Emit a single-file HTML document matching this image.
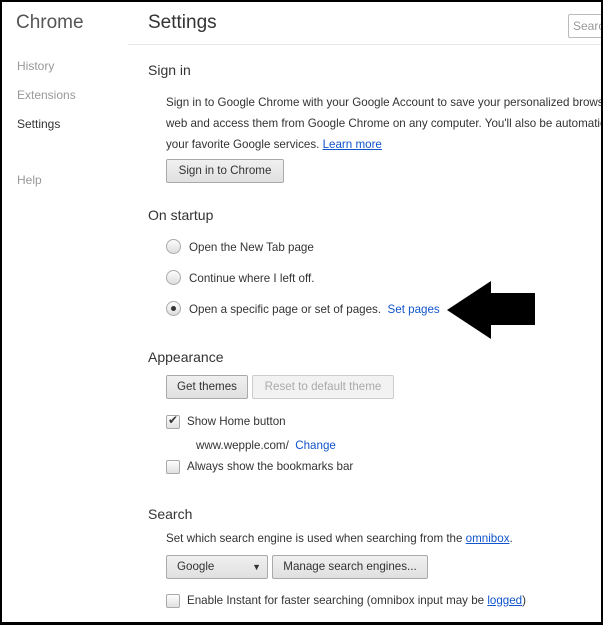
<!DOCTYPE html>
<html><head><style>
body{margin:0;width:603px;height:625px;overflow:hidden;background:#fff;font-family:"Liberation Sans",sans-serif;position:relative}
.f{position:absolute;left:0;top:0;width:599px;height:620px;border:2px solid #000;border-bottom-width:3px;z-index:5;pointer-events:none}
.a{position:absolute;white-space:nowrap}
.nav{font-size:12px;color:#999}
.h{font-size:14px;color:#333}
.t{font-size:11.6px;color:#333}
.lk{color:#15c;text-decoration:underline}
.b{color:#15c}
.btn{position:absolute;height:22px;border:1px solid #aaa;border-radius:2px;background:linear-gradient(#f0f0f0,#e0e0e0);font-size:11.6px;color:#333;line-height:22px;text-align:center;box-sizing:content-box}
.rad{position:absolute;width:13px;height:13px;border:1px solid #aaa;border-radius:50%;background:linear-gradient(#fdfdfd,#ddd)}
.cb{position:absolute;width:12px;height:12px;border:1px solid #aaa;border-radius:2px;background:linear-gradient(#fdfdfd,#e0e0e0)}
.clip{position:absolute;left:0;top:0;width:601px;height:625px;overflow:hidden}
</style></head><body>
<div class="f"></div>
<div class="clip">
<div class="a" style="left:16px;top:12px;font-size:19px;color:#555">Chrome</div>
<div class="a nav" style="left:17px;top:59px">History</div>
<div class="a nav" style="left:17px;top:88px">Extensions</div>
<div class="a nav" style="left:17px;top:117px;color:#333">Settings</div>
<div class="a nav" style="left:17px;top:173px">Help</div>
<div class="a" style="left:148px;top:12px;font-size:19px;color:#333">Settings</div>
<div style="position:absolute;left:128px;top:44px;width:473px;height:1px;background:#e6e6e6"></div>
<div style="position:absolute;left:568px;top:14px;width:40px;height:22px;border:1px solid #bbb;border-radius:2px;font-size:12px;color:#999;line-height:22px;padding-left:4px">Search</div>
<div class="a h" style="left:148px;top:62px">Sign in</div>
<div class="a t" style="left:166px;top:92px;line-height:21px">Sign in to Google Chrome with your Google Account to save your personalized browser features to the<br>web and access them from Google Chrome on any computer. You'll also be automatically signed in to<br>your favorite Google services. <span class="lk">Learn more</span></div>
<div class="btn" style="left:166px;top:159px;width:116px">Sign in to Chrome</div>
<div class="a h" style="left:148px;top:207px">On startup</div>
<div class="rad" style="left:166px;top:239px"></div>
<div class="a t" style="left:189px;top:241px">Open the New Tab page</div>
<div class="rad" style="left:166px;top:270px"></div>
<div class="a t" style="left:189px;top:272px">Continue where I left off.</div>
<div class="rad" style="left:166px;top:301px"><div style="position:absolute;left:4px;top:4px;width:5px;height:5px;border-radius:50%;background:#333"></div></div>
<div class="a t" style="left:189px;top:303px">Open a specific page or set of pages. &nbsp;<span class="b">Set pages</span></div>
<svg style="position:absolute;left:445px;top:279px" width="92" height="63"><polygon points="2,31 46,2 46,14 90,14 90,46 46,46 46,60" fill="#000"/></svg>
<div class="a h" style="left:148px;top:349px">Appearance</div>
<div class="btn" style="left:166px;top:375px;width:80px">Get themes</div>
<div class="btn" style="left:252px;top:375px;width:140px;color:#aaa;border-color:#ccc;background:#f2f2f2">Reset to default theme</div>
<div class="cb" style="left:166px;top:415px"><span style="position:absolute;left:1px;top:-3px;font-size:12px;color:#333">✔</span></div>
<div class="a t" style="left:187px;top:415px">Show Home button</div>
<div class="a t" style="left:196px;top:439px">www.wepple.com/ &nbsp;<span class="b">Change</span></div>
<div class="cb" style="left:166px;top:460px"></div>
<div class="a t" style="left:187px;top:460px">Always show the bookmarks bar</div>
<div class="a h" style="left:148px;top:506px">Search</div>
<div class="a t" style="left:166px;top:532px">Set which search engine is used when searching from the <span class="lk">omnibox</span>.</div>
<div class="btn" style="left:166px;top:555px;width:100px;text-align:left;padding-left:0"><span style="margin-left:10px">Google</span><span style="position:absolute;right:6px;top:0;font-size:9px">▼</span></div>
<div class="btn" style="left:272px;top:555px;width:154px">Manage search engines...</div>
<div class="cb" style="left:166px;top:594px"></div>
<div class="a t" style="left:187px;top:594px">Enable Instant for faster searching (omnibox input may be <span class="lk">logged</span>)</div>
</div>
</body></html>
